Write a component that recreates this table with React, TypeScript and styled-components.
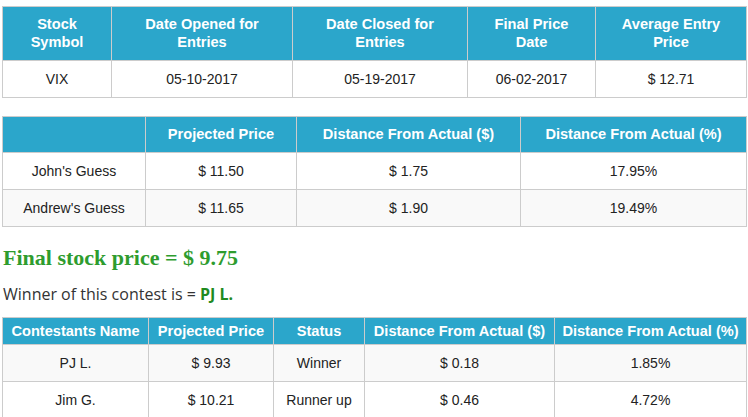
import React from "react";
import styled, { createGlobalStyle } from "styled-components";

const GlobalStyle = createGlobalStyle`
  html, body { margin: 0; padding: 0; background: #fff; }
  body { font-family: "Liberation Sans", Arial, sans-serif; color: #222; }
`;

const Page = styled.div`
  padding: 6px 2px 0;
  display: flex;
  flex-direction: column;
  align-items: flex-start;
`;

const Table = styled.table<{ $gap?: number }>`
  width: 745px;
  table-layout: fixed;
  border-collapse: separate;
  border-spacing: 0;
  border-left: 1px solid #cccccc;
  border-top: 1px solid #cccccc;
  margin-top: ${(p) => p.$gap ?? 0}px;
  font-size: 14px;
  line-height: 18px;
`;

const Th = styled.th<{ $w: number; $compact?: boolean }>`
  width: ${(p) => p.$w}px;
  box-sizing: border-box;
  background: #2ba6cb;
  color: #fff;
  font-size: 14.6px;
  font-weight: bold;
  text-align: center;
  padding: ${(p) => (p.$compact ? "4px 2px" : "8px 8px 9px")};
  border-right: 1px solid #cccccc;
  border-bottom: 1px solid #cccccc;
  white-space: ${(p) => (p.$compact ? "nowrap" : "pre-line")};
`;

const Row = styled.tr<{ $shade?: boolean }>`
  background: ${(p) => (p.$shade ? "#f9f9f9" : "#ffffff")};
`;

const Td = styled.td`
  box-sizing: border-box;
  text-align: center;
  padding: 9px 10px;
  color: #222;
  border-right: 1px solid #cccccc;
  border-bottom: 1px solid #cccccc;
  white-space: nowrap;
`;

const Heading = styled.h2`
  margin: 18px 0 0 1px;
  font-family: "Liberation Serif", "Times New Roman", serif;
  font-size: 22px;
  line-height: 26px;
  font-weight: bold;
  color: #2e9c2e;
`;

const Winner = styled.p`
  margin: 12px 0 0 1px;
  font-family: "Open Sans", sans-serif;
  font-size: 16px;
  line-height: 22px;
  color: #333;
`;

const WinnerName = styled.strong`
  color: #1f8a1f;
  font-weight: bold;
`;

type Col = { label: string; w: number };

const t1Cols: Col[] = [
  { label: "Stock\nSymbol", w: 109 },
  { label: "Date Opened for\nEntries", w: 181 },
  { label: "Date Closed for\nEntries", w: 175 },
  { label: "Final Price\nDate", w: 128 },
  { label: "Average Entry\nPrice", w: 151 },
];
const t1Rows = [["VIX", "05-10-2017", "05-19-2017", "06-02-2017", "$ 12.71"]];

const t2Cols: Col[] = [
  { label: "", w: 143 },
  { label: "Projected Price", w: 151 },
  { label: "Distance From Actual ($)", w: 224 },
  { label: "Distance From Actual (%)", w: 226 },
];
const t2Rows = [
  ["John's Guess", "$ 11.50", "$ 1.75", "17.95%"],
  ["Andrew's Guess", "$ 11.65", "$ 1.90", "19.49%"],
];

const t3Cols: Col[] = [
  { label: "Contestants Name", w: 146 },
  { label: "Projected Price", w: 125 },
  { label: "Status", w: 91 },
  { label: "Distance From Actual ($)", w: 190 },
  { label: "Distance From Actual (%)", w: 192 },
];
const t3Rows = [
  ["PJ L.", "$ 9.93", "Winner", "$ 0.18", "1.85%"],
  ["Jim G.", "$ 10.21", "Runner up", "$ 0.46", "4.72%"],
];

function DataTable({
  cols,
  rows,
  gap,
  compact,
  shadeOdd,
}: {
  cols: Col[];
  rows: string[][];
  gap?: number;
  compact?: boolean;
  shadeOdd?: boolean;
}) {
  return (
    <Table $gap={gap}>
      <thead>
        <tr>
          {cols.map((c, i) => (
            <Th key={i} $w={c.w} $compact={compact}>
              {c.label}
            </Th>
          ))}
        </tr>
      </thead>
      <tbody>
        {rows.map((r, i) => (
          <Row key={i} $shade={shadeOdd ? i % 2 === 0 : i % 2 === 1}>
            {r.map((v, j) => (
              <Td key={j}>{v}</Td>
            ))}
          </Row>
        ))}
      </tbody>
    </Table>
  );
}

export default function App() {
  return (
    <>
      <GlobalStyle />
      <Page>
        <DataTable cols={t1Cols} rows={t1Rows} />
        <DataTable cols={t2Cols} rows={t2Rows} gap={18} />
        <Heading>Final stock price = $ 9.75</Heading>
        <Winner>
          Winner of this contest is = <WinnerName>PJ L.</WinnerName>
        </Winner>
        <DataTable cols={t3Cols} rows={t3Rows} gap={12} compact shadeOdd />
      </Page>
    </>
  );
}
